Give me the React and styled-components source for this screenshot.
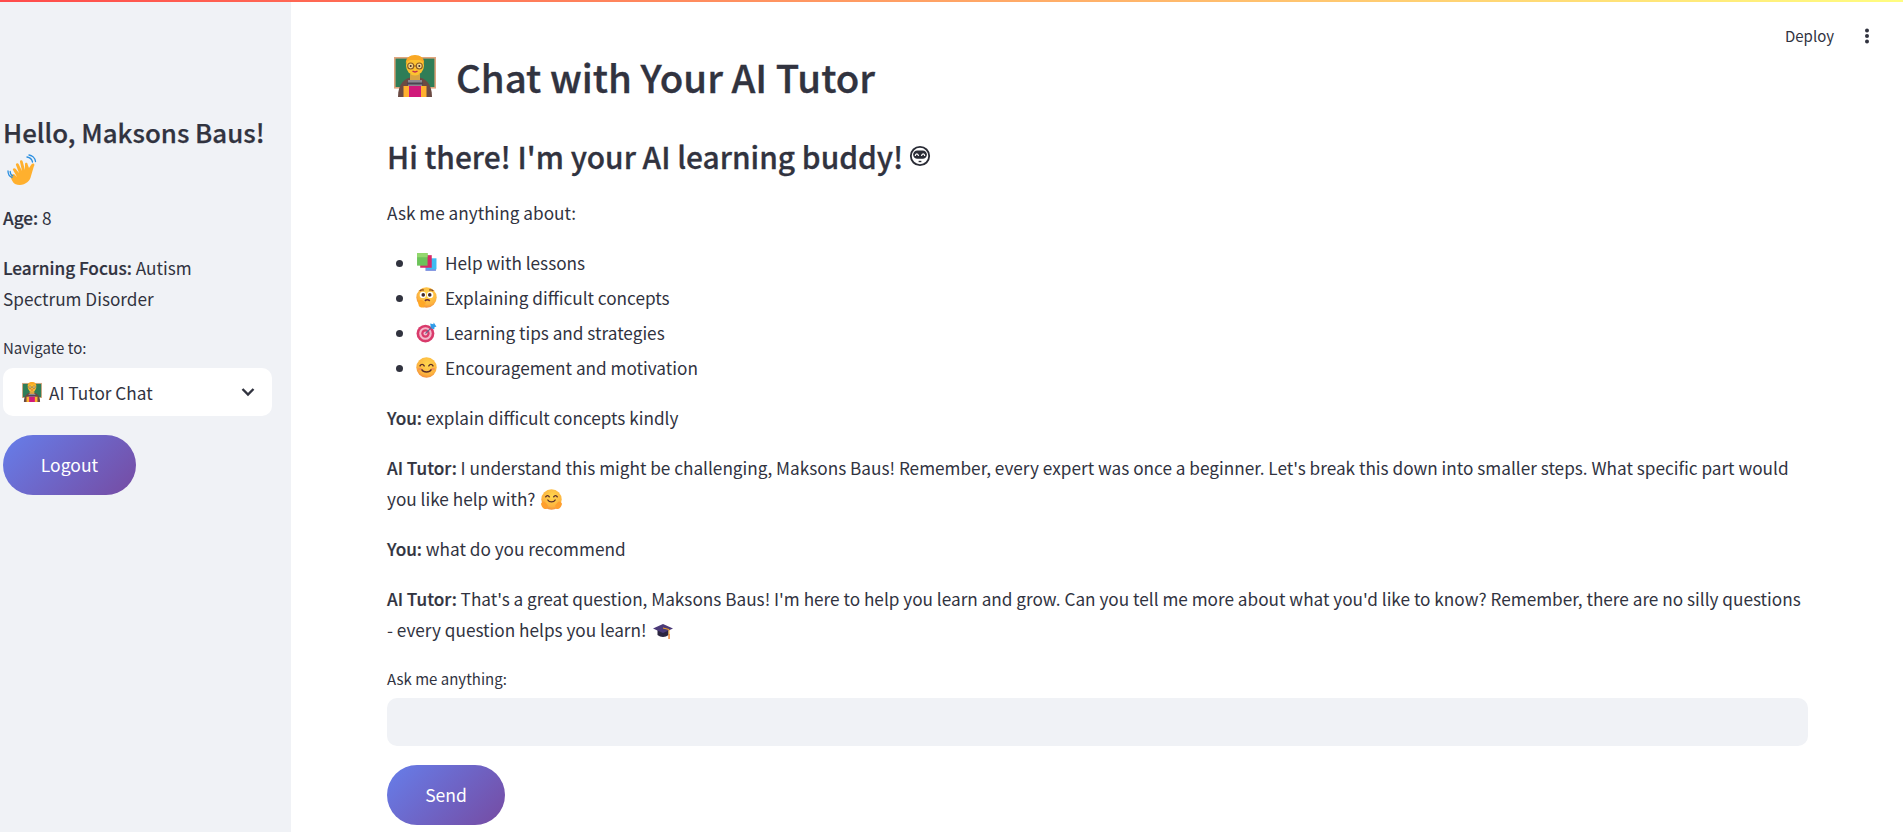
import React from "react";
import styled, { createGlobalStyle } from "styled-components";

const Global = createGlobalStyle`
  html, body { margin: 0; padding: 0; height: 832px; overflow: hidden; background: #fff; }
  body { font-family: "Noto Sans CJK SC", "Noto Sans", sans-serif; color: #31333f; }
  * { box-sizing: border-box; }
`;

const Page = styled.div`
  position: relative;
  display: flex;
  height: 832px;
  overflow: hidden;
`;
const Decoration = styled.div`
  position: absolute;
  top: 0; left: 0; right: 0;
  height: 2px;
  background: linear-gradient(90deg, #ff4b4b, #fffd80);
  z-index: 3;
`;
const Sidebar = styled.aside`
  flex: 0 0 291px;
  background: #f0f2f6;
  padding: 112px 19px 0 3px;
`;
const Main = styled.main`
  flex: 1;
  padding: 44px 95px 0 96px;
  min-width: 0;
`;
const Toolbar = styled.div`
  position: absolute;
  top: 24px; right: 33px;
  display: flex;
  align-items: center;
  gap: 30px;
  font-size: 15px;
  line-height: 24px;
`;
const Title = styled.h1`
  margin: 0 0 26px;
  display: flex;
  align-items: center;
  gap: 20px;
  font-size: 38.4px;
  line-height: 64px;
  font-weight: 500;
  -webkit-text-stroke: 0.35px #31333f;
  padding-left: 7px;
`;
const Subtitle = styled.h2`
  margin: 0 0 19px;
  display: flex;
  align-items: center;
  gap: 6px;
  font-size: 29.9px;
  line-height: 44px;
  font-weight: 500;
  -webkit-text-stroke: 0.3px #31333f;
`;
const SideHeading = styled.h3`
  margin: 0 0 12px;
  font-size: 25.85px;
  line-height: 39px;
  font-weight: 500;
  -webkit-text-stroke: 0.25px #31333f;
`;
const Para = styled.p`
  margin: ${(p) => p.$m || "0 0 19px"};
  font-size: 17.2px;
  line-height: 31px;
`;
const Bold = styled.strong`
  font-weight: 500;
  -webkit-text-stroke: 0.2px #31333f;
`;
const BulletList = styled.ul`
  margin: 0 0 17px;
  padding: 0 0 0 29px;
`;
const Item = styled.li`
  font-size: 17.2px;
  line-height: 35px;
`;
const ItemBody = styled.span`
  display: inline-flex;
  align-items: center;
  gap: 8px;
  vertical-align: top;
`;
const EmojiWrap = styled.span`
  display: inline-block;
  width: ${(p) => p.$s}px;
  height: ${(p) => p.$s}px;
  vertical-align: ${(p) => p.$v || "-4px"};
  margin-left: ${(p) => p.$ml || 0}px;
  flex: none;
  svg { display: block; width: 100%; height: 100%; }
`;
const FieldLabel = styled.div`
  font-size: 15px;
  line-height: 22px;
  margin-bottom: ${(p) => p.$mb}px;
`;
const TextField = styled.input`
  display: block;
  width: 100%;
  height: 48px;
  border: 0;
  outline: 0;
  border-radius: 10px;
  background: #f0f2f6;
  margin-bottom: 19px;
`;
const Select = styled.div`
  height: 48px;
  width: 269px;
  background: #fff;
  border-radius: 10px;
  display: flex;
  align-items: center;
  padding: 0 15px 0 19px;
  font-size: 17.2px;
  margin-bottom: 19px;
  gap: 7px;
`;
const Grow = styled.span`
  flex: 1;
`;
const PillButton = styled.button`
  display: block;
  height: 60px;
  width: ${(p) => p.$w}px;
  border: 0;
  border-radius: 30px;
  background: linear-gradient(135deg, #667eea 0%, #764ba2 100%);
  color: #fff;
  font: inherit;
  font-size: 17.5px;
  padding: 0 0 2px;
`;

const Teacher = () => (
  <svg viewBox="0 0 42 42">
    <rect x="0.800" y="2.800" width="40.400" height="30" fill="#2f7d57" stroke="#e0a57e" strokeWidth="1.600" />
    <path d="M4 42c0-13 6-20 17-20s17 7 17 20z" fill="#6b4a43" />
    <path d="M16 19h10v7H16z" fill="#d9a441" />
    <rect x="14" y="25" width="14" height="6" fill="#8c8890" />
    <rect x="13" y="27.500" width="16" height="2" fill="#4b4450" />
    <rect x="14" y="31" width="14" height="11" fill="#d0197a" />
    <path d="M9.500 31h5.500v11H9.500zM27 31h5.500v11H27z" fill="#ffb02e" />
    <ellipse cx="21" cy="10.500" rx="9" ry="10" fill="#fdc22f" />
    <path d="M12 9c-1-6 4-9 9-9s10 3 9 9c-1-3-3-4-5-4h-8c-2 0-4 1-5 4z" fill="#f9a825" />
    <circle cx="16.700" cy="11" r="3" fill="#f7d88a" stroke="#8a5a24" strokeWidth="1.100" />
    <circle cx="25.300" cy="11" r="3" fill="#f7d88a" stroke="#8a5a24" strokeWidth="1.100" />
    <path d="M19.700 11h2.600" stroke="#8a5a24" strokeWidth="1" />
    <circle cx="16.700" cy="11" r="1" fill="#3b2c2c" />
    <circle cx="25.300" cy="11" r="1" fill="#3b2c2c" />
    <path d="M18.500 16c1.600 1.200 3.400 1.200 5 0" fill="none" stroke="#c22a50" strokeWidth="1.500" />
  </svg>
);
const Wave = () => (
  <svg viewBox="0 0 32 32">
    <path d="M8 30c-3-2-5-7-4-9l3-1 3 3L6 16c-.6-1.400 1.400-2.600 2.600-1.200L12 19 9 11c-.5-1.600 1.800-2.600 2.600-1L15 17l-2-9c-.3-1.800 2.200-2.300 2.700-.6L18 16l0-6c.2-1.700 2.400-1.500 2.600.2L22 14c2-3 3-5 4.600-4.400 1.200.5.800 1.700.2 3L24 22c-1 6-8 11-16 8z" fill="#ffb02e" />
    <path d="M20 3c2.600.5 5 2.500 5.500 5M22 1c3 .4 6 3 6.500 6.500" fill="none" stroke="#2b8fe0" strokeWidth="1.300" strokeLinecap="round" />
    <path d="M1 17c0 3 1.500 5.500 4 6.500M3.200 17.500c0 2 1 3.500 2.600 4.300" fill="none" stroke="#2b8fe0" strokeWidth="1.300" strokeLinecap="round" />
  </svg>
);
const Nerd = () => (
  <svg viewBox="0 0 24 24">
    <circle cx="12" cy="12" r="10" fill="none" stroke="#2a2c36" strokeWidth="2" />
    <rect x="4.500" y="6" width="15" height="9" rx="4.500" fill="#2a2c36" />
    <path d="M6.800 12c.4-3 3-3 3.600 0M13.600 12c.6-3 3.200-3 3.600 0" fill="none" stroke="#fff" strokeWidth="1.300" />
    <path d="M10.500 18h3" stroke="#2a2c36" strokeWidth="1.500" />
  </svg>
);
const Books = () => (
  <svg viewBox="0 0 20 20">
    <rect x="9" y="7" width="10" height="11" fill="#7a8fe0" />
    <rect x="10" y="6" width="9.500" height="10.500" fill="#3dbdf2" />
    <rect x="4" y="3" width="11" height="12" fill="#d62a68" />
    <rect x="1" y="1" width="10" height="12" fill="#6cc35a" />
    <rect x="1" y="1" width="10" height="4" fill="#93d86e" />
  </svg>
);
const FaceBase = ({ id, children }) => (
  <svg viewBox="0 0 20 20">
    <defs>
      <radialGradient id={id} cx="0.550" cy="0.350" r="0.750">
        <stop offset="0" stopColor="#ffd84f" />
        <stop offset="0.650" stopColor="#fdb43f" />
        <stop offset="1" stopColor="#ec7a3c" />
      </radialGradient>
    </defs>
    <circle cx="10" cy="10" r="9.700" fill={`url(#${id})`} />
    {children}
  </svg>
);
const Thinking = () => (
  <FaceBase id="fthink">
    <circle cx="6.500" cy="7.500" r="3" fill="#fff" />
    <circle cx="13.500" cy="7.500" r="3" fill="#fff" />
    <circle cx="6.900" cy="7.500" r="1.700" fill="#40282a" />
    <circle cx="13.100" cy="7.500" r="1.700" fill="#40282a" />
    <path d="M3.500 3.800c1-1 2.800-1.300 4-.8M12.500 3c1.200-.5 3-.2 4 .8" stroke="#8a4a20" strokeWidth="1.100" fill="none" />
    <path d="M8.500 13.200c1.200-1.300 3.400-1.300 4.600 0" stroke="#6b2a30" strokeWidth="1.500" fill="none" />
    <path d="M1.800 13.200c1-1 3.200-1 4.200-.5l3.200 2c.5 1-.5 1.500-1.100 1.400L8.200 19c-2 1-5 .5-5.600-1.500z" fill="#ffa726" />
  </FaceBase>
);
const Target = () => (
  <svg viewBox="0 0 20 20">
    <circle cx="9" cy="11" r="8.500" fill="#d93a6b" />
    <circle cx="9" cy="11" r="6" fill="#f4b8cb" />
    <circle cx="9" cy="11" r="4" fill="#d93a6b" />
    <circle cx="9" cy="11" r="1.900" fill="#f4b8cb" />
    <path d="M9 11 16 4" stroke="#5a6a90" strokeWidth="1" />
    <path d="M13.500 1.500l3 .6.400-1.600 2.600 4-1.800.3-.3 2-2-.3-1.300-1.600z" fill="#2e9be8" />
  </svg>
);
const Smile = () => (
  <FaceBase id="fsmile">
    <path d="M3.800 8.500c1-2 3-2 4 0M12.200 8.500c1-2 3-2 4 0" stroke="#5a2e2a" strokeWidth="1.300" fill="none" strokeLinecap="round" />
    <path d="M5.500 12c1.500 3 7.500 3 9 0" stroke="#5a2e2a" strokeWidth="1.300" fill="none" strokeLinecap="round" />
    <ellipse cx="3.800" cy="11.500" rx="1.800" ry="1.200" fill="#ef7a60" opacity=".6" />
    <ellipse cx="16.200" cy="11.500" rx="1.800" ry="1.200" fill="#ef7a60" opacity=".6" />
  </FaceBase>
);
const Hug = () => (
  <FaceBase id="fhug">
    <path d="M4.500 7.500c.8-1.600 2.600-1.600 3.400 0M12.100 7.500c.8-1.600 2.600-1.600 3.400 0" stroke="#5a2e2a" strokeWidth="1.300" fill="none" strokeLinecap="round" />
    <path d="M6.500 10.500c1.400 2.400 5.600 2.400 7 0" stroke="#5a2e2a" strokeWidth="1.300" fill="none" strokeLinecap="round" />
    <path d="M0 14c1-2 3-2.500 4-1.500l2.500 3-1 3.500c-3 .5-5-2-5.500-5zM20 14c-1-2-3-2.500-4-1.500l-2.500 3 1 3.500c3 .5 5-2 5.500-5z" fill="#ff9f2e" />
  </FaceBase>
);
const Cap = () => (
  <svg viewBox="0 0 20 20">
    <path d="M4.500 9v5c3 2.500 8 2.500 11 0V9z" fill="#2b2540" />
    <path d="M0 7.500 10 3l10 4.500L10 12z" fill="#4b3a78" />
    <path d="M10 7l6 1.500v5" stroke="#f6a623" strokeWidth="1" fill="none" />
    <rect x="15.300" y="13" width="1.500" height="5" fill="#f08a3c" />
  </svg>
);
const Chevron = () => (
  <svg width="18" height="18" viewBox="0 0 18 18">
    <path d="M3.500 6 9 11.500 14.500 6" fill="none" stroke="#31333f" strokeWidth="2.400" />
  </svg>
);
const Kebab = () => (
  <svg width="6" height="16" viewBox="0 0 6 16">
    <circle cx="3" cy="2.500" r="2" fill="#31333f" />
    <circle cx="3" cy="8" r="2" fill="#31333f" />
    <circle cx="3" cy="13.500" r="2" fill="#31333f" />
  </svg>
);

const E = ({ s, v, ml, children }) => (
  <EmojiWrap $s={s} $v={v} $ml={ml}>{children}</EmojiWrap>
);

const topics = [
  [<Books key="b" />, "Help with lessons"],
  [<Thinking key="t" />, "Explaining difficult concepts"],
  [<Target key="g" />, "Learning tips and strategies"],
  [<Smile key="s" />, "Encouragement and motivation"],
];

export default function App() {
  return (
    <>
      <Global />
      <Page>
        <Decoration />
        <Sidebar>
          <SideHeading>
            Hello, Maksons Baus! <E s={32} v="-4px" ml={4}><Wave /></E>
          </SideHeading>
          <Para $m="0 0 19px"><Bold>Age:</Bold> 8</Para>
          <Para $m="0 0 23px"><Bold>Learning Focus:</Bold> Autism Spectrum Disorder</Para>
          <FieldLabel $mb={9}>Navigate to:</FieldLabel>
          <Select>
            <E s={20}><Teacher /></E>
            <Grow>AI Tutor Chat</Grow>
            <Chevron />
          </Select>
          <PillButton $w={133}>Logout</PillButton>
        </Sidebar>
        <Main>
          <Title><E s={42}><Teacher /></E>Chat with Your AI Tutor</Title>
          <Subtitle>Hi there! I'm your AI learning buddy!<E s={22}><Nerd /></E></Subtitle>
          <Para $m="0 0 17px">Ask me anything about:</Para>
          <BulletList>
            {topics.map(([icon, text]) => (
              <Item key={text}>
                <ItemBody><E s={21}>{icon}</E>{text}</ItemBody>
              </Item>
            ))}
          </BulletList>
          <Para><Bold>You:</Bold> explain difficult concepts kindly</Para>
          <Para>
            <Bold>AI Tutor:</Bold> I understand this might be challenging, Maksons Baus! Remember, every expert was once a beginner. Let's break this down into smaller steps. What specific part would you like help with? <E s={21} ml={2}><Hug /></E>
          </Para>
          <Para><Bold>You:</Bold> what do you recommend</Para>
          <Para $m="0 0 23px">
            <Bold>AI Tutor:</Bold> That's a great question, Maksons Baus! I'm here to help you learn and grow. Can you tell me more about what you'd like to know? Remember, there are no silly questions -{"\u00a0"}every question helps you learn! <E s={20} ml={3}><Cap /></E>
          </Para>
          <FieldLabel $mb={8}>Ask me anything:</FieldLabel>
          <TextField aria-label="Ask me anything" />
          <PillButton $w={118}>Send</PillButton>
        </Main>
        <Toolbar>
          <span>Deploy</span>
          <Kebab />
        </Toolbar>
      </Page>
    </>
  );
}
